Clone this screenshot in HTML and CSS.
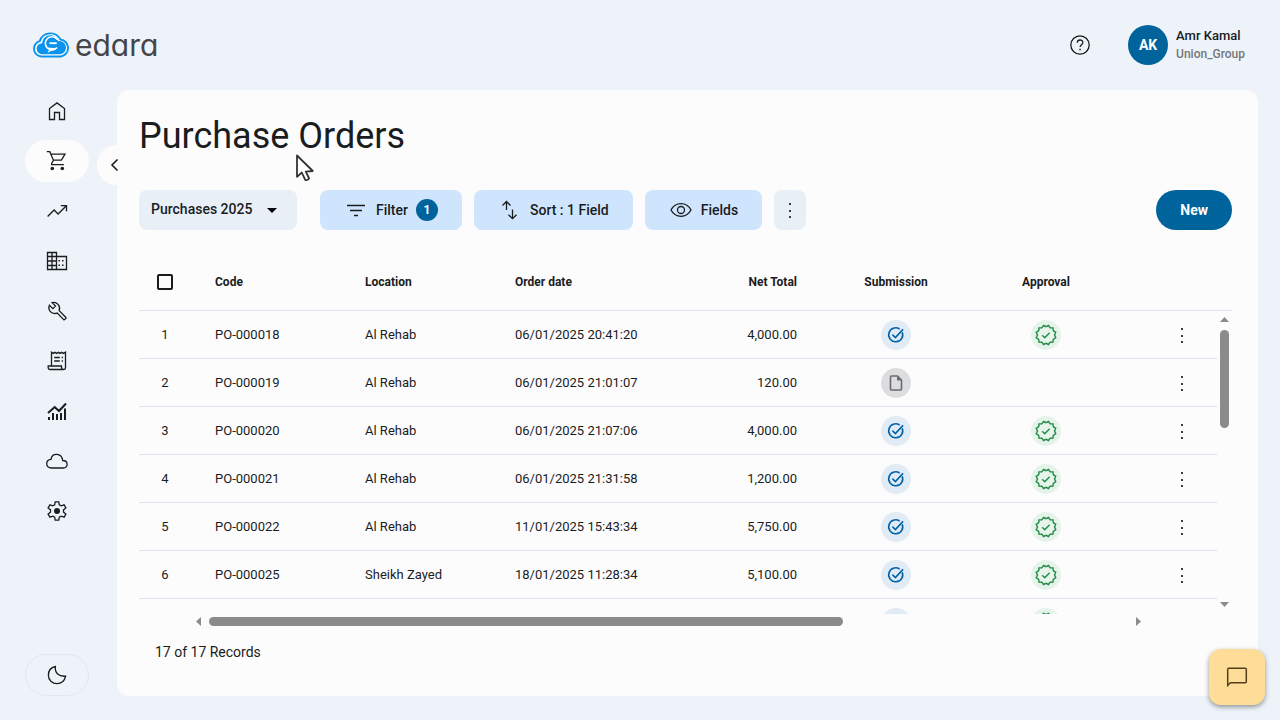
FILE: index.html
```html
<!DOCTYPE html>
<html lang="en">
<head>
    <meta charset="UTF-8">
    <meta name="viewport" content="width=device-width, initial-scale=1.0">
    <title>Purchase Orders</title>
    <link rel="stylesheet" href="styles.css">
</head>
<body>
    <svg class="sprite" aria-hidden="true">
        <symbol id="icon-submitted" viewBox="0 0 18 18">
            <path d="M15.2 6.2A7 7 0 1 1 12.6 3" />
            <path d="M5.4 8.6l3 3L16 3.4" />
        </symbol>
        <symbol id="icon-draft" viewBox="0 0 18 18">
            <path d="M10.5 2H4.6Q3.5 2 3.5 3.1v11.8Q3.5 16 4.6 16h8.800Q14.500 16 14.500 14.900V6z" />
            <path class="fill" d="M10 2v4.500h4.500z" />
        </symbol>
        <symbol id="icon-approved" viewBox="0 0 22 22">
            <path d="M11 2.700L13.500 1.500l1.700 2.300 2.800.1.300 2.800 2.400 1.600L19.600 11l1.100 2.700-2.400 1.600-.3 2.800-2.800.1-1.700 2.300L11 19.300l-2.500 1.200-1.700-2.300-2.800-.1-.3-2.800-2.400-1.600L2.400 11 1.300 8.300l2.400-1.600.3-2.800 2.800-.1 1.700-2.300z" />
            <path d="M7.200 11.200l2.600 2.500 4.800-5" />
        </symbol>
        <symbol id="icon-more" viewBox="0 0 22 22">
            <path class="fill" d="M10 4h2v2h-2zM10 11h2v2h-2zM10 17h2v2h-2z" />
        </symbol>
    </svg>

    <header class="header">
        <a class="logo" href="#">
            <svg class="logo__mark" viewBox="0 0 38 26" aria-hidden="true">
                <path d="M9.500 24.500a7.800 7.800 0 0 1-1.800-15.300A11.300 11.300 0 0 1 28.500 7.500a8.600 8.600 0 0 1 .5 17z" fill="#fff" stroke="#0a94f0" stroke-width="1.900" />
                <path d="M10 22.200a5.500 5.500 0 0 1 .2-11C10.500 6.300 14 3.200 18.500 3.200c3.600 0 6.400 2.400 7.700 6A6.500 6.500 0 0 1 28.600 22.200z" fill="#0a94f0" />
                <path d="M25.300 7.500A6.600 6.600 0 1 0 25 15.500" fill="none" stroke="#fff" stroke-width="1.600" />
                <path d="M17.500 11.200h7.200" fill="none" stroke="#fff" stroke-width="1.800" />
                <path d="M15.500 15.400l8.500.8-8.300 4.500 1.300-2.700z" fill="#fff" />
            </svg>
            <span class="logo__text">edara</span>
        </a>
        <button class="help" aria-label="Help">
            <svg class="icon" viewBox="0 0 24 24">
                <circle cx="12" cy="12" r="9.200" />
                <path d="M9.300 9.700c0-3.600 5.500-3.500 5.500-.3 0 2.300-2.700 2.400-2.700 4.700" />
                <path class="fill" d="M11.300 15.700h1.500v1.500h-1.500z" />
            </svg>
        </button>
        <div class="user">
            <div class="user__avatar">AK</div>
            <div>
                <div class="user__name">Amr Kamal</div>
                <div class="user__company">Union_Group</div>
            </div>
        </div>
    </header>

    <div class="layout">
        <nav class="sidebar">
            <a class="sidebar__item" href="#" aria-label="Home">
                <svg class="icon" viewBox="0 0 24 24"><path d="M4.500 20.500V9.500L12 3.900l7.500 5.600v11h-5v-7h-5v7z" /></svg>
            </a>
            <a class="sidebar__item sidebar__item_active" href="#" aria-label="Purchases">
                <svg class="icon" viewBox="0 0 24 24">
                    <path d="M1.800 2.700h3l3.600 8.500h8l3.600-6H6M8.400 11.200L6.600 14.700v1h12.300" />
                    <circle class="fill" cx="7.300" cy="19.500" r="1.800" />
                    <circle class="fill" cx="17.300" cy="19.500" r="1.800" />
                </svg>
            </a>
            <a class="sidebar__item" href="#" aria-label="Sales">
                <svg class="icon" viewBox="0 0 24 24"><path d="M2.600 17.500l6.500-6.500 4 4 8-8M15.800 6.700h5.700v5.500" /></svg>
            </a>
            <a class="sidebar__item" href="#" aria-label="Companies">
                <svg class="icon" viewBox="0 0 24 24">
                    <path d="M2.500 3.500h9v17h-9zM11.500 7.500h10v13h-10M7 3.500v17M2.500 7.500h9M2.500 12h9M2.500 16.500h9" />
                    <path class="fill" d="M13.500 11H15v1.500h-1.500zM17 11h1.500v1.500H17zM13.500 15.500H15V17h-1.500zM17 15.500h1.500V17H17z" />
                </svg>
            </a>
            <a class="sidebar__item" href="#" aria-label="Maintenance">
                <svg class="icon" viewBox="0 0 24 24"><path d="M18.700 20.600l-6.500-6.500c-4.500 1.500-8.900-1.900-8.300-6.300l.5-1.500 3.500 3.400 2.600-2.600-3.400-3.500C11.900 2.400 15.900 7 14.200 11.700l6.500 6.500c.6.600.3 1.100-.1 1.500-.5.600-1.200 1.400-1.900.9z" /></svg>
            </a>
            <a class="sidebar__item" href="#" aria-label="Accounting">
                <svg class="icon" viewBox="0 0 24 24"><path d="M6.500 17V3.200l1.700 1.200 1.700-1.200 1.700 1.200 1.700-1.200L15 4.400l1.700-1.200 1.700 1.200 2.100-1.200v15.600c0 1.200-.7 1.700-1.700 1.700H5.200c-1.300 0-2-.7-2-2V17h13.300v1.500c0 1.300.7 2 2.100 2M9.200 8.500h5.600M9.200 12h5.600M16.700 8.500H18M16.700 12H18" /></svg>
            </a>
            <a class="sidebar__item" href="#" aria-label="Analytics">
                <svg class="icon icon_bold" viewBox="0 0 24 24"><path d="M3 14l6.700-6 4.300 4 7-7.500M4 21v-3M8 21v-7M12 21v-6M16 21v-7M20 21V9.500" /></svg>
            </a>
            <a class="sidebar__item" href="#" aria-label="Cloud">
                <svg class="icon" viewBox="0 0 24 24"><path d="M6.500 19c-6.300 0-6.300-8.200-.5-8.700C7 3.600 16.700 3.500 17.700 11.500c5.800 0 5.700 7.500.7 7.500z" /></svg>
            </a>
            <a class="sidebar__item" href="#" aria-label="Settings">
                <svg class="icon" viewBox="0 0 24 24">
                    <path d="M10.200 2.800h3.600l.5 3 1.900 1.100 2.900-1.100 1.800 3.100-2.400 2v2.200l2.400 2-1.800 3.100-2.900-1.100-1.900 1.100-.5 3h-3.600l-.5-3-1.900-1.100-2.900 1.100-1.800-3.100 2.400-2v-2.200l-2.400-2 1.800-3.100 2.900 1.100 1.900-1.100z" />
                    <circle class="fill" cx="12" cy="12" r="3" />
                </svg>
            </a>
            <button class="sidebar__theme" aria-label="Dark mode">
                <svg class="icon" viewBox="0 0 24 24"><path d="M10.400 3.500c-.8 6.500 3.400 10.200 10.200 9.700-1 4.700-4.300 7.500-8.600 7.500-4.900 0-8.600-3.600-8.600-8.500 0-4.500 2.700-7.800 7-8.700z" /></svg>
            </button>
            <button class="sidebar__collapse" aria-label="Collapse menu">
                <svg class="icon" viewBox="0 0 24 24"><path d="M14.500 6.500L9 12l5.500 5.500" /></svg>
            </button>
        </nav>

        <main class="panel">
            <h1 class="panel__title">Purchase Orders</h1>

            <div class="toolbar">
                <div class="view">
                    <select class="view__select" aria-label="View">
                        <option>Purchases 2025</option>
                    </select>
                    <svg class="view__arrow" viewBox="0 0 10 5" aria-hidden="true"><path d="M0 0h10L5 5z" /></svg>
                </div>
                <button class="btn">
                    <svg class="icon" viewBox="0 0 24 24"><path d="M3 7.500h18M6 12.500h12M10 17.500h4" /></svg>
                    Filter
                    <span class="btn__badge">1</span>
                </button>
                <button class="btn">
                    <svg class="icon" viewBox="0 0 24 24"><path d="M8.500 12V3.500M4.500 7.500l4-4 4 4M14.500 11.500v9M10.500 16.700l4 4 4-4" /></svg>
                    Sort : 1 Field
                </button>
                <button class="btn">
                    <svg class="icon" viewBox="0 0 24 24">
                        <path d="M2 12c4.600-8.400 15.400-8.400 20 0-4.600 8.400-15.400 8.400-20 0z" />
                        <circle cx="12" cy="12" r="3.500" />
                    </svg>
                    Fields
                </button>
                <button class="btn btn_more" aria-label="More actions"><svg class="icon icon_more"><use href="#icon-more" /></svg></button>
                <button class="btn btn_new">New</button>
            </div>

            <div class="grid">
                <div class="grid__view">
                    <table class="table">
                        <thead>
                            <tr>
                                <th class="table__num"><input class="table__check" type="checkbox" aria-label="Select all"></th>
                                <th class="table__text">Code</th>
                                <th class="table__text">Location</th>
                                <th class="table__text">Order date</th>
                                <th class="table__total">Net Total</th>
                                <th class="table__status">Submission</th>
                                <th class="table__status">Approval</th>
                                <th class="table__menu"></th>
                            </tr>
                        </thead>
                        <tbody>
                            <tr>
                                <td class="table__num">1</td>
                                <td>PO-000018</td>
                                <td>Al Rehab</td>
                                <td>06/01/2025 20:41:20</td>
                                <td class="table__total">4,000.00</td>
                                <td class="table__status"><span class="status status_submitted"><svg><use href="#icon-submitted" /></svg></span></td>
                                <td class="table__status"><span class="status status_approved"><svg><use href="#icon-approved" /></svg></span></td>
                                <td class="table__menu"><button class="more" aria-label="Row menu"><svg class="icon icon_more"><use href="#icon-more" /></svg></button></td>
                            </tr>
                            <tr>
                                <td class="table__num">2</td>
                                <td>PO-000019</td>
                                <td>Al Rehab</td>
                                <td>06/01/2025 21:01:07</td>
                                <td class="table__total">120.00</td>
                                <td class="table__status"><span class="status status_draft"><svg><use href="#icon-draft" /></svg></span></td>
                                <td class="table__status"></td>
                                <td class="table__menu"><button class="more" aria-label="Row menu"><svg class="icon icon_more"><use href="#icon-more" /></svg></button></td>
                            </tr>
                            <tr>
                                <td class="table__num">3</td>
                                <td>PO-000020</td>
                                <td>Al Rehab</td>
                                <td>06/01/2025 21:07:06</td>
                                <td class="table__total">4,000.00</td>
                                <td class="table__status"><span class="status status_submitted"><svg><use href="#icon-submitted" /></svg></span></td>
                                <td class="table__status"><span class="status status_approved"><svg><use href="#icon-approved" /></svg></span></td>
                                <td class="table__menu"><button class="more" aria-label="Row menu"><svg class="icon icon_more"><use href="#icon-more" /></svg></button></td>
                            </tr>
                            <tr>
                                <td class="table__num">4</td>
                                <td>PO-000021</td>
                                <td>Al Rehab</td>
                                <td>06/01/2025 21:31:58</td>
                                <td class="table__total">1,200.00</td>
                                <td class="table__status"><span class="status status_submitted"><svg><use href="#icon-submitted" /></svg></span></td>
                                <td class="table__status"><span class="status status_approved"><svg><use href="#icon-approved" /></svg></span></td>
                                <td class="table__menu"><button class="more" aria-label="Row menu"><svg class="icon icon_more"><use href="#icon-more" /></svg></button></td>
                            </tr>
                            <tr>
                                <td class="table__num">5</td>
                                <td>PO-000022</td>
                                <td>Al Rehab</td>
                                <td>11/01/2025 15:43:34</td>
                                <td class="table__total">5,750.00</td>
                                <td class="table__status"><span class="status status_submitted"><svg><use href="#icon-submitted" /></svg></span></td>
                                <td class="table__status"><span class="status status_approved"><svg><use href="#icon-approved" /></svg></span></td>
                                <td class="table__menu"><button class="more" aria-label="Row menu"><svg class="icon icon_more"><use href="#icon-more" /></svg></button></td>
                            </tr>
                            <tr>
                                <td class="table__num">6</td>
                                <td>PO-000025</td>
                                <td>Sheikh Zayed</td>
                                <td>18/01/2025 11:28:34</td>
                                <td class="table__total">5,100.00</td>
                                <td class="table__status"><span class="status status_submitted"><svg><use href="#icon-submitted" /></svg></span></td>
                                <td class="table__status"><span class="status status_approved"><svg><use href="#icon-approved" /></svg></span></td>
                                <td class="table__menu"><button class="more" aria-label="Row menu"><svg class="icon icon_more"><use href="#icon-more" /></svg></button></td>
                            </tr>
                            <tr>
                                <td class="table__num"></td>
                                <td></td>
                                <td></td>
                                <td></td>
                                <td class="table__total"></td>
                                <td class="table__status"><span class="status status_submitted"><svg><use href="#icon-submitted" /></svg></span></td>
                                <td class="table__status"><span class="status status_approved"><svg><use href="#icon-approved" /></svg></span></td>
                                <td class="table__menu"></td>
                            </tr>
                        </tbody>
                    </table>
                </div>
                <div class="scroll scroll_y">
                    <svg class="scroll__arrow" viewBox="0 0 9 5"><path d="M0 5h9L4.500 0z" /></svg>
                    <div class="scroll__track"><div class="scroll__thumb"></div></div>
                    <svg class="scroll__arrow" viewBox="0 0 9 5"><path d="M0 0h9L4.500 5z" /></svg>
                </div>
            </div>
            <div class="scroll scroll_x">
                <svg class="scroll__arrow" viewBox="0 0 5 9"><path d="M5 0v9L0 4.500z" /></svg>
                <div class="scroll__track"><div class="scroll__thumb"></div></div>
                <svg class="scroll__arrow" viewBox="0 0 5 9"><path d="M0 0v9l5-4.500z" /></svg>
            </div>

            <div class="panel__footer">17 of 17 Records</div>
        </main>
    </div>

    <button class="chat" aria-label="Chat">
        <svg class="icon" viewBox="0 0 24 24"><path d="M2.700 20.500V4.200q0-1 1-1h16.600q1 0 1 1v12.600q0 1-1 1H5.400z" /></svg>
    </button>

    <svg class="cursor" viewBox="0 0 19 28" aria-hidden="true">
        <path d="M2 1.500v21.300l4.800-4.300 3.300 7.200q2 1.200 4-1.200l-3.300-6.900 7-.6z" />
    </svg>
</body>
</html>
```
FILE: styles.css
```css
:root {
    --pageBg: #edf3f9;
    --panelBg: #fdfcfd;
    --textColor: #1a1c1e;
    --primary: #00639b;
    --tonal: #cfe5fd;
    --lineColor: #dae3ec;
    --scrollColor: #8b8b8b;
}

* {
    box-sizing: border-box;
}

body {
    display: flex;
    flex-direction: column;
    height: 100vh;
    margin: 0;
    background-color: var(--pageBg);
    color: var(--textColor);
    font-family: Roboto, "Liberation Sans", sans-serif;
    font-size: 13px;
}

button {
    padding: 0;
    border: 0;
    background: none;
    color: inherit;
    font: inherit;
    cursor: pointer;
}

.sprite {
    display: none;
}

.icon {
    display: block;
    flex: none;
    width: 24px;
    height: 24px;
    fill: none;
    stroke: currentColor;
    stroke-width: 1.3;
}

.icon_bold {
    stroke-width: 2;
}

.icon_more {
    width: 22px;
    height: 22px;
    color: #3b3d40;
}

.fill {
    fill: currentColor;
    stroke: none;
}

/* header */
.header {
    display: flex;
    flex: none;
    align-items: center;
    height: 90px;
    padding: 0 35px 0 32px;
}

.logo {
    display: flex;
    align-items: center;
    gap: 5px;
    color: #444549;
    text-decoration: none;
}

.logo__mark {
    width: 38px;
    height: 26px;
}

.logo__text {
    font-family: Inter, sans-serif;
    font-feature-settings: "cv11";
    font-size: 30px;
    line-height: 40px;
}

.help {
    margin-left: auto;
}

.user {
    display: flex;
    align-items: center;
    gap: 8px;
    margin-left: 36px;
    font-weight: 500;
}

.user__avatar {
    width: 40px;
    border-radius: 50%;
    background: var(--primary);
    color: #fff;
    font-size: 14px;
    font-weight: 700;
    line-height: 40px;
    text-align: center;
}

.user__name {
    line-height: 18px;
}

.user__company {
    color: #74777b;
    font-size: 12px;
    line-height: 18px;
}

/* sidebar */
.layout {
    display: flex;
    flex: 1;
    min-height: 0;
    padding: 0 22px 24px 25px;
}

.sidebar {
    position: relative;
    display: flex;
    flex: none;
    flex-direction: column;
    gap: 8px;
    width: 92px;
}

.sidebar__item,
.sidebar__theme {
    display: flex;
    flex: none;
    align-items: center;
    justify-content: center;
    width: 64px;
    height: 42px;
    border-radius: 21px;
    color: var(--textColor);
}

.sidebar__item_active {
    background: var(--panelBg);
}

.sidebar__theme {
    margin-top: auto;
    border: 1px solid #e1e8ed;
}

.sidebar__collapse {
    position: absolute;
    top: 55px;
    right: -20px;
    display: flex;
    align-items: center;
    width: 40px;
    height: 40px;
    padding-left: 6px;
    border-radius: 50%;
    background: var(--panelBg);
}

.sidebar__collapse .icon {
    stroke-width: 1.6;
}

/* content */
.panel {
    display: flex;
    flex: 1;
    flex-direction: column;
    min-width: 0;
    padding: 24px 26px 34px 22px;
    border-radius: 12px;
    background: var(--panelBg);
}

.panel__title {
    margin: 0 0 32px;
    font-size: 36px;
    font-weight: 400;
    line-height: 44px;
}

.panel__footer {
    padding: 13px 16px 0;
    font-size: 14px;
    line-height: 20px;
}

.toolbar {
    display: flex;
    flex: none;
    gap: 12px;
    margin-bottom: 24px;
    font-size: 14px;
    font-weight: 500;
}

.view {
    display: grid;
    align-items: center;
    width: 158px;
    height: 40px;
    margin-right: 11px;
    border-radius: 8px;
    background: #e8eff6;
}

.view__select,
.view__arrow {
    grid-area: 1 / 1;
}

.view__select {
    width: 100%;
    height: 100%;
    padding: 0 12px 2px;
    border: 0;
    background: none;
    color: inherit;
    font: inherit;
    appearance: none;
}

.view__arrow {
    justify-self: end;
    width: 10px;
    height: 5px;
    margin-right: 20px;
    pointer-events: none;
}

.btn {
    display: flex;
    align-items: center;
    gap: 8px;
    height: 40px;
    padding: 0 24px 1px;
    border-radius: 8px;
    background: var(--tonal);
}

.btn__badge {
    width: 22px;
    border-radius: 50%;
    background: var(--primary);
    color: #fff;
    font-size: 12px;
    font-weight: 700;
    line-height: 22px;
}

.btn_more {
    padding: 0 5px;
    background: #e8eff6;
}

.btn_new {
    margin-left: auto;
    border-radius: 20px;
    background: var(--primary);
    color: #fff;
    font-weight: 700;
}

/* table */
.grid {
    display: flex;
    flex: 1;
    min-height: 0;
}

.grid__view {
    flex: 1;
    overflow: hidden;
}

.table {
    width: 100%;
    border-spacing: 0;
    table-layout: fixed;
}

.table th,
.table td {
    height: 48px;
    padding: 0 0 0 24px;
    border-bottom: 1px solid var(--lineColor);
    text-align: left;
    white-space: nowrap;
}

.table th {
    height: 57px;
    font-size: 12px;
    font-weight: 700;
}

.table .table__num {
    width: 52px;
    padding: 0;
    text-align: center;
}

.table__text {
    width: 150px;
}

.table .table__total {
    padding-right: 24px;
    text-align: right;
}

.table .table__status {
    width: 150px;
    padding: 0;
    text-align: center;
}

.table .table__menu {
    width: 96px;
    padding-right: 24px;
    text-align: right;
}

.table__check {
    display: block;
    width: 16px;
    height: 16px;
    margin: 0 auto;
    border: 2px solid var(--textColor);
    border-radius: 2px;
    appearance: none;
}

.status {
    display: flex;
    align-items: center;
    justify-content: center;
    width: 30px;
    height: 30px;
    margin: 0 auto;
    border-radius: 50%;
}

.status svg {
    width: 18px;
    height: 18px;
    fill: none;
    stroke: currentColor;
    stroke-width: 1.6;
}

.status_submitted {
    background: #e1ebf5;
    color: #0063a8;
}

.status_draft {
    background: #dcdddf;
    color: #6b6b6d;
}

.status_approved {
    background: #e5f3ea;
    color: #218a48;
}

.status_approved svg {
    width: 22px;
    height: 22px;
    stroke-width: 1.4;
}

.more {
    display: inline-block;
    vertical-align: middle;
}

/* scrollbars */
.scroll {
    display: flex;
    flex: none;
    align-items: center;
    gap: 8px;
}

.scroll__arrow {
    display: block;
    flex: none;
    fill: var(--scrollColor);
}

.scroll__track {
    flex: 1;
}

.scroll__thumb {
    border-radius: 5px;
    background: var(--scrollColor);
}

.scroll_y {
    flex-direction: column;
    width: 15px;
    margin-top: 56px;
    padding: 6px 0 7px;
    border-top: 1px solid var(--lineColor);
}

.scroll_y .scroll__arrow {
    width: 9px;
    height: 5px;
}

.scroll_y .scroll__thumb {
    width: 9px;
    height: 37%;
}

.scroll_y .scroll__track {
    min-height: 0;
}

.scroll_x {
    height: 15px;
    margin: 0 91px 0 57px;
}

.scroll_x .scroll__arrow {
    width: 5px;
    height: 9px;
}

.scroll_x .scroll__thumb {
    width: 69%;
    height: 9px;
}

/* overlays */
.chat {
    position: fixed;
    right: 15px;
    bottom: 15px;
    display: flex;
    align-items: center;
    justify-content: center;
    width: 56px;
    height: 56px;
    border-radius: 12px;
    background: #fedd98;
    box-shadow: 0 2px 5px rgba(0, 0, 0, .4);
    color: #553f1b;
}

.chat .icon {
    width: 24px;
    height: 24px;
    stroke-width: 1.5;
}

.cursor {
    position: absolute;
    top: 154px;
    left: 295px;
    width: 19px;
    height: 28px;
    fill: #fff;
    stroke: #333;
    stroke-width: 1.8;
    stroke-linejoin: round;
    pointer-events: none;
}
```
